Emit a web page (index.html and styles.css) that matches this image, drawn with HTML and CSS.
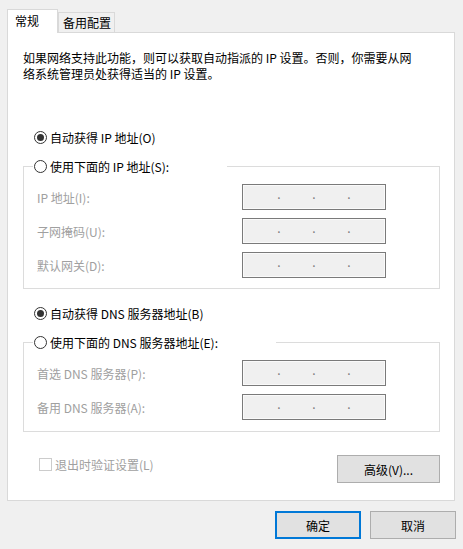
FILE: index.html
```html
<!DOCTYPE html>
<html lang="zh-CN">
<head>
<meta charset="UTF-8">
<title>Internet 协议版本 4 (TCP/IPv4) 属性</title>
<link rel="stylesheet" href="styles.css">
</head>
<body>

<div class="tabs">
    <div class="tab active">常规</div>
    <div class="tab">备用配置</div>
</div>

<div class="panel">
    <p class="intro">如果网络支持此功能，则可以获取自动指派的 IP 设置。否则，你需要从网<br>络系统管理员处获得适当的 IP 设置。</p>

    <div class="option first">
        <span class="radio checked"></span>
        <span>自动获得 IP 地址(O)</span>
    </div>

    <fieldset class="group">
        <legend class="option">
            <span class="radio"></span>
            <span>使用下面的 IP 地址(S):</span>
        </legend>
        <div class="field">
            <span class="field-label">IP 地址(I):</span>
            <div class="ip"><span>.</span><span>.</span><span>.</span></div>
        </div>
        <div class="field">
            <span class="field-label">子网掩码(U):</span>
            <div class="ip"><span>.</span><span>.</span><span>.</span></div>
        </div>
        <div class="field">
            <span class="field-label">默认网关(D):</span>
            <div class="ip"><span>.</span><span>.</span><span>.</span></div>
        </div>
    </fieldset>

    <div class="option second">
        <span class="radio checked"></span>
        <span>自动获得 DNS 服务器地址(B)</span>
    </div>

    <fieldset class="group dns">
        <legend class="option">
            <span class="radio"></span>
            <span>使用下面的 DNS 服务器地址(E):</span>
        </legend>
        <div class="field">
            <span class="field-label">首选 DNS 服务器(P):</span>
            <div class="ip"><span>.</span><span>.</span><span>.</span></div>
        </div>
        <div class="field">
            <span class="field-label">备用 DNS 服务器(A):</span>
            <div class="ip"><span>.</span><span>.</span><span>.</span></div>
        </div>
    </fieldset>

    <div class="panel-footer">
        <div class="check">
            <span class="check-box"></span>
            <span>退出时验证设置(L)</span>
        </div>
        <button class="btn advanced">高级(V)...</button>
    </div>
</div>

<div class="actions">
    <button class="btn default">确定</button>
    <button class="btn">取消</button>
</div>

</body>
</html>
```

FILE: styles.css
```css
* {
    box-sizing: border-box;
}
body {
    margin: 0;
    padding: 9px 7px 0 7px;
    background-color: #f0f0f0;
    font-family: "Noto Sans CJK SC", sans-serif;
    font-size: 12px;
    color: #000;
}
.tabs {
    display: flex;
    align-items: flex-end;
    height: 23px;
}
.tab {
    width: 57px;
    height: 20px;
    padding-left: 4px;
    line-height: 19px;
    border: 1px solid #d9d9d9;
    border-bottom: none;
    background-color: #f0f0f0;
}
.tab.active {
    position: relative;
    z-index: 1;
    width: 51px;
    height: 24px;
    margin-bottom: -1px;
    padding-left: 7px;
    line-height: 21px;
    background-color: #fff;
}
.panel {
    width: 448px;
    height: 469px;
    padding: 17px 14px 0 15px;
    border: 1px solid #d9d9d9;
    background-color: #fff;
}
.intro {
    margin: 0;
    line-height: 16px;
}
.option {
    display: flex;
    align-items: center;
    gap: 3px;
    height: 20px;
    padding-left: 11px;
}
.option.first {
    margin-top: 45px;
}
.option.second {
    margin-top: 14px;
}
.radio {
    position: relative;
    width: 13px;
    height: 13px;
    border: 1px solid #333;
    border-radius: 50%;
    background-color: #fff;
    flex-shrink: 0;
}
.radio.checked::after {
    content: "";
    position: absolute;
    left: 2px;
    top: 2px;
    width: 7px;
    height: 7px;
    border-radius: 50%;
    background-color: #333;
}
.group {
    margin: 9px 0 0 0;
    padding: 8px 0 10px 0;
    border: 1px solid #dcdcdc;
    min-width: 0;
}
.group.dns {
    padding-bottom: 11px;
}
.group legend.option {
    margin-left: 9px;
    padding: 0 58px 0 1px;
    background-color: #fff;
}
.field {
    display: flex;
    align-items: center;
    height: 26px;
    padding-left: 13px;
}
.field + .field {
    margin-top: 8px;
}
.field-label {
    width: 205px;
    color: #a0a0a0;
}
.ip {
    display: flex;
    justify-content: center;
    width: 144px;
    height: 26px;
    line-height: 18px;
    border: 1px solid #7a7a7a;
    box-shadow: inset 0 0 0 1px #fafafa;
    background-color: #f0f0f0;
    color: #7a7a7a;
}
.ip span {
    width: 35px;
    text-align: center;
}
.panel-footer {
    display: flex;
    justify-content: space-between;
    align-items: flex-start;
    margin-top: 23px;
}
.check {
    display: flex;
    align-items: center;
    gap: 3px;
    height: 18px;
    margin-left: 16px;
    color: #a0a0a0;
}
.check-box {
    width: 13px;
    height: 13px;
    border: 1px solid #cccccc;
    background-color: #fff;
}
.btn {
    width: 86px;
    height: 28px;
    padding: 0;
    border: 1px solid #adadad;
    background-color: #e1e1e1;
    font-family: inherit;
    font-size: 12px;
    color: #000;
}
.btn.advanced {
    width: 103px;
}
.btn.default {
    border: 2px solid #0078d7;
}
.actions {
    display: flex;
    justify-content: flex-end;
    gap: 9px;
    margin-top: 10px;
}
```
